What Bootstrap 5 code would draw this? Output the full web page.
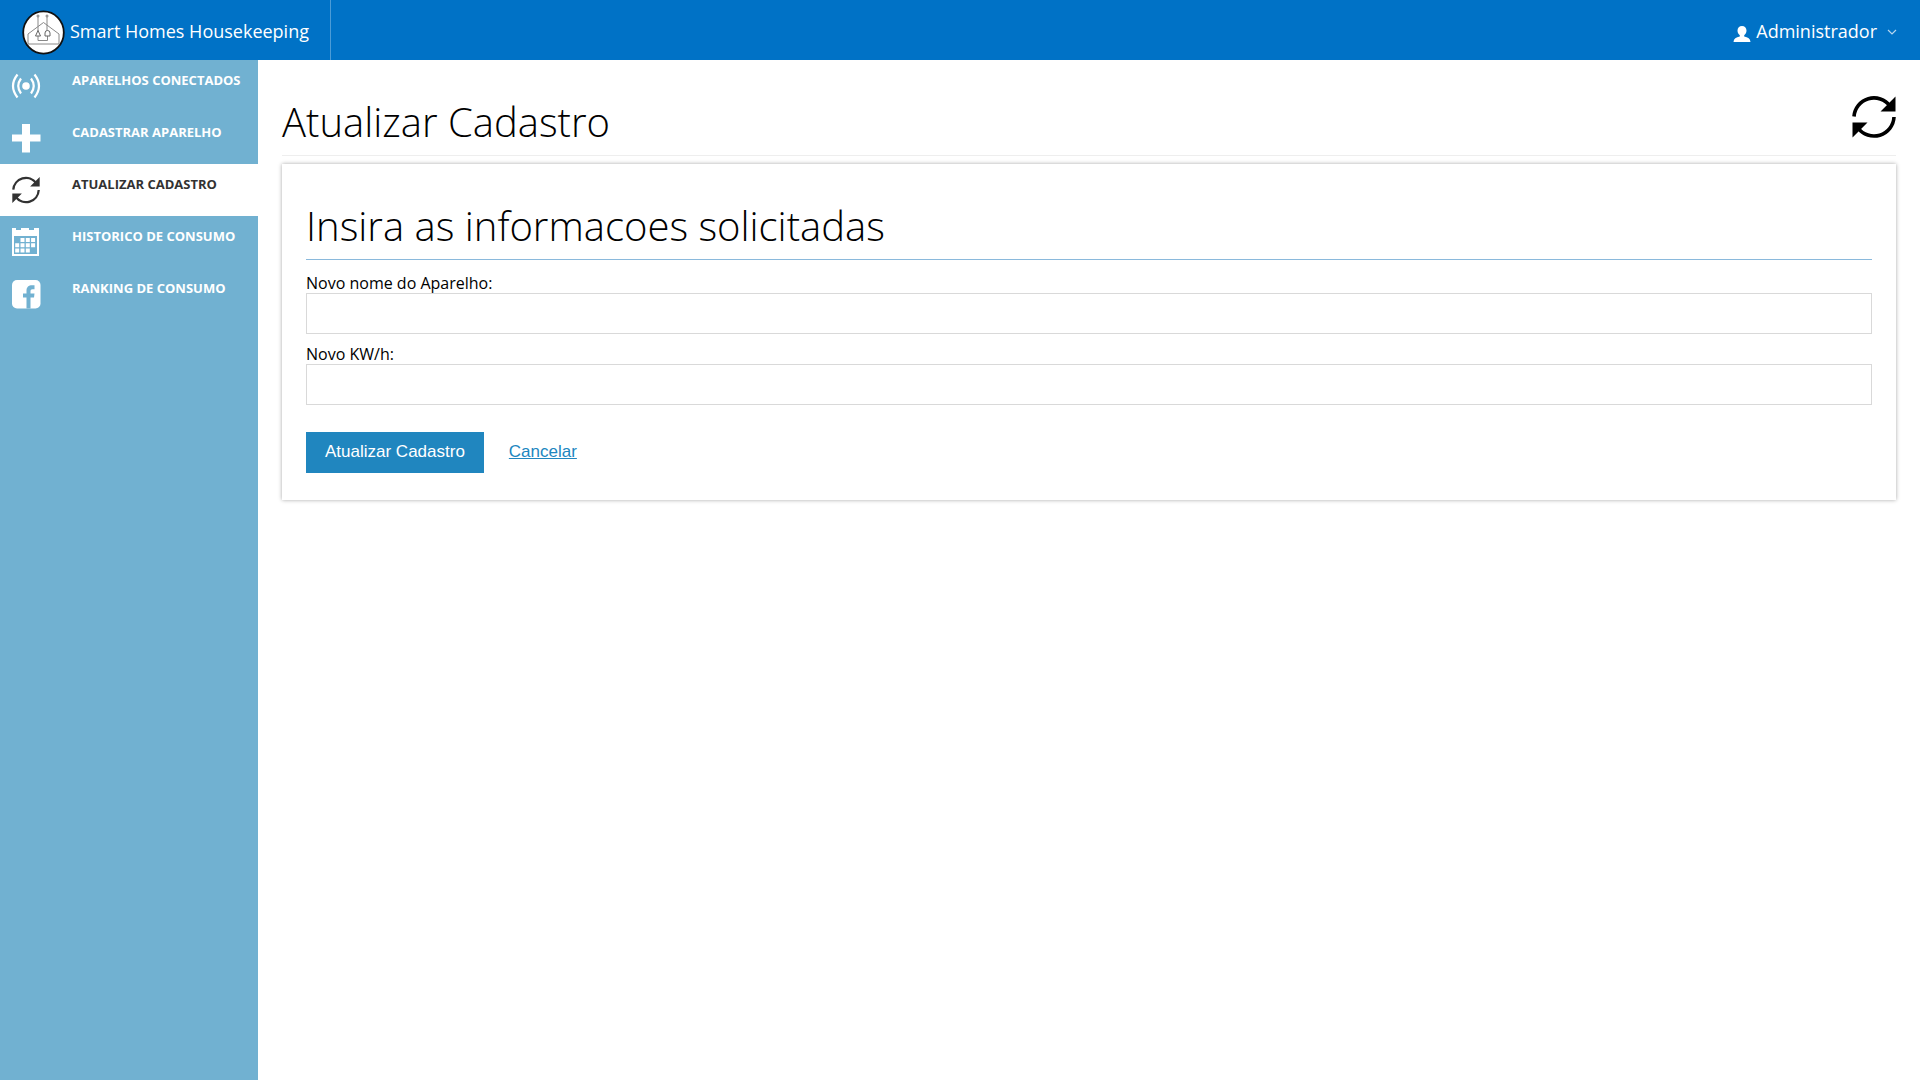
<!DOCTYPE html>
<html lang="pt-BR">
<head>
<meta charset="utf-8">
<meta name="viewport" content="width=device-width, initial-scale=1">
<title>Smart Homes Housekeeping</title>
<link href="https://cdn.jsdelivr.net/npm/bootstrap@5.3.0/dist/css/bootstrap.min.css" rel="stylesheet">
<style>
body { font-family: "Open Sans", "Noto Sans", sans-serif; color: #000; background: #fff; }
.app-bar { height: 60px; background: #0072c6; color: #fff; }
.app-bar a, .app-bar button { color: #fff; font-size: 18px; line-height: 24px; }
.app-bar span { padding-bottom: 2px; }
.brand { padding: 4px 21px 0 22px; gap: 5px; border-right: 1px solid #4c9cd7; }
.user-menu { padding: 4px 23px 0 0; gap: 5px; }
.user-menu .chevron { margin-left: 5px; }
.side { width: 258px; background: #71b1d1; }
.side .nav-link { height: 52px; padding: 10px 0 0 11px; gap: 31px; color: #fff; font-size: 13px; line-height: 20px; font-weight: 700; text-transform: uppercase; white-space: nowrap; }
.side .nav-link.active { background: #fff; color: #323232; }
.side svg { width: 30px; height: 30px; margin-top: 1px; flex: none; }
.main-area { padding: 34px 24px 24px; }
h1, h2 { font-weight: 300; font-size: 40px; line-height: 56px; margin: 0; }
.title-row { border-bottom: 1px solid #eee; height: 62px; }
.title-row svg { margin-top: 1px; }
.panel-box { margin-top: 8px; padding: 34px 24px 27px; box-shadow: 0 0 4px rgba(0,0,0,.35); }
.panel-box h2 { height: 62px; border-bottom: 1px solid #8ab9dc; margin-bottom: 13px; }
.field-label { display: block; font-size: 16px; line-height: 20px; }
.form-control { height: 41px; border: 1px solid #d9d9d9; border-radius: 0; }
.form-control + .field-label { margin-top: 10px; }
.actions { font-family: "Liberation Sans", Arial, sans-serif; margin-top: 27px; gap: 6px; }
.actions .btn { height: 41px; font-size: 17px; line-height: 20px; border: 0; border-radius: 0; padding: 0 19px 2px; }
.btn-save, .btn-save:hover { background: #2086bf; color: #fff; }
.actions .btn-link { color: #2086bf; text-decoration: underline; }
</style>
</head>
<body class="min-vh-100 d-flex flex-column">
<svg width="0" height="0" class="position-absolute" aria-hidden="true">
  <symbol id="i-loop" viewBox="0 0 44 44">
    <g fill="none" stroke="currentColor" stroke-width="3.6"><path d="M2 21.5A20 20 0 0 1 38 11"/><path d="M42 22A20 20 0 0 1 6 33"/></g>
    <path fill="currentColor" d="M43.5 1.5V16.500H28.500zM.5 27.500H15.500L.5 42.500z"/>
  </symbol>
</svg>
<header class="app-bar d-flex justify-content-between">
  <a href="#" class="brand d-flex align-items-center text-decoration-none">
    <svg width="43" height="45" viewBox="0 0 43 45" fill="none" aria-hidden="true">
      <ellipse cx="21.500" cy="22.500" rx="20.300" ry="21.200" fill="#fff" stroke="#111" stroke-width="1.800"/>
      <path d="M6 34V24L21.500 12.500 37 24V34zM16 7V21M25 7V21M16 26V30.500H25.500V26" stroke="#888"/>
      <path d="M13.500 26L16 20.500 18.500 26zM23 26V23A2.500 2.500 0 0 1 28 23V26z" fill="#fff" stroke="#666"/>
      <circle cx="16" cy="6" r="1" stroke="#777"/><circle cx="25" cy="6" r="1" stroke="#777"/>
    </svg>
    <span>Smart Homes Housekeeping</span>
  </a>
  <button type="button" class="user-menu btn border-0 d-flex align-items-center" aria-haspopup="true">
    <svg width="18" height="18" viewBox="0 0 18 18" fill="currentColor" class="mt-1" aria-hidden="true"><path d="M9 1C6.300 1 4.500 2.800 4.500 5.500 4.500 7.500 5.400 9.300 6.800 10.200V11.600C3 12.200.7 13.800.5 17H17.500C17.300 13.800 15 12.200 11.200 11.600V10.200C12.600 9.300 13.500 7.500 13.500 5.500 13.500 2.800 11.700 1 9 1z"/></svg>
    <span>Administrador</span>
    <svg width="10" height="8" viewBox="0 0 10 8" fill="none" stroke="#b7d6ee" stroke-width="1.200" class="chevron" aria-hidden="true"><path d="M1 2L5 6 9 2"/></svg>
  </button>
</header>
<div class="d-flex flex-grow-1">
  <nav class="side nav flex-column flex-nowrap flex-shrink-0" aria-label="Menu">
    <a href="#" class="nav-link d-flex align-items-start">
      <svg viewBox="0 0 30 30" fill="none" stroke="currentColor" stroke-width="2.200" aria-hidden="true"><circle cx="15" cy="15" r="3.800" fill="currentColor" stroke="none"/><path d="M10 7.500Q4.500 15 10 22.500M20 7.500Q25.500 15 20 22.500M6.500 3.500Q-2.500 15 6.500 26.500M23.500 3.500Q32.500 15 23.500 26.500"/></svg>
      <span>Aparelhos conectados</span></a>
    <a href="#" class="nav-link d-flex align-items-start">
      <svg viewBox="0 0 30 30" fill="currentColor" aria-hidden="true"><path d="M11 1H19V11.500H29.500V18.500H19V29.500H11V18.500H1V11.500H11z"/></svg>
      <span>Cadastrar aparelho</span></a>
    <a href="#" class="nav-link active d-flex align-items-start" aria-current="page">
      <svg viewBox="0 0 30 30" aria-hidden="true"><use href="#i-loop" x="1" y="1" width="28" height="28"/></svg>
      <span>Atualizar cadastro</span></a>
    <a href="#" class="nav-link d-flex align-items-start">
      <svg viewBox="0 0 30 30" fill="currentColor" aria-hidden="true"><path fill-rule="evenodd" d="M1 1H5V3H10V1H18V3H23V1H28V29H1zM3 9H26V27H3z"/><path d="M9.500 11h4v4h-4zM14.800 11h4v4h-4zM20.100 11h4v4h-4zM4.200 16.300h4v4h-4zM9.500 16.300h4v4h-4zM14.800 16.300h4v4h-4zM20.100 16.300h4v4h-4zM4.200 21.600h4v4h-4zM9.500 21.600h4v4h-4zM14.800 21.600h4v4h-4z"/></svg>
      <span>Historico de consumo</span></a>
    <a href="#" class="nav-link d-flex align-items-start">
      <svg viewBox="0 0 30 30" aria-hidden="true"><rect x="1" y="1" width="28.500" height="28.500" rx="5" fill="currentColor"/><path fill="#71b1d1" d="M15.500 29.500V18.500H12V14.500H15.500V12C15.500 8 17.700 6.300 21 6.300H23.500V10.300H21.500C20 10.300 19.500 11 19.500 12.300V14.500H23.500L23 18.500H19.500V29.500z"/></svg>
      <span>Ranking de consumo</span></a>
  </nav>
  <main class="main-area flex-grow-1">
    <div class="title-row d-flex justify-content-between">
      <h1>Atualizar Cadastro</h1>
      <svg width="44" height="44" color="#000" class="flex-shrink-0" aria-hidden="true"><use href="#i-loop"/></svg>
    </div>
    <form class="panel-box">
      <h2>Insira as informacoes solicitadas</h2>
      <label class="field-label" for="nome">Novo nome do Aparelho:</label>
      <input type="text" class="form-control" id="nome">
      <label class="field-label" for="kwh">Novo KW/h:</label>
      <input type="text" class="form-control" id="kwh">
      <div class="actions d-flex">
        <button type="submit" class="btn btn-save">Atualizar Cadastro</button>
        <button type="button" class="btn btn-link">Cancelar</button>
      </div>
    </form>
  </main>
</div>
<script src="https://cdn.jsdelivr.net/npm/bootstrap@5.3.0/dist/js/bootstrap.bundle.min.js"></script>
</body>
</html>
